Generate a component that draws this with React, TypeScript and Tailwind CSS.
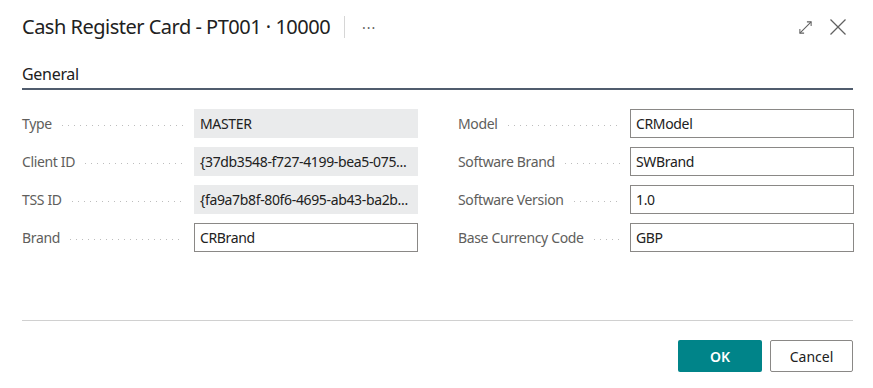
import { useState } from 'react';

type Field = { label: string; value: string; readOnly?: boolean };

const LEFT: Field[] = [
  { label: 'Type', value: 'MASTER', readOnly: true },
  { label: 'Client ID', value: '{37db3548-f727-4199-bea5-075...', readOnly: true },
  { label: 'TSS ID', value: '{fa9a7b8f-80f6-4695-ab43-ba2b...', readOnly: true },
  { label: 'Brand', value: 'CRBrand' },
];

const RIGHT: Field[] = [
  { label: 'Model', value: 'CRModel' },
  { label: 'Software Brand', value: 'SWBrand' },
  { label: 'Software Version', value: '1.0' },
  { label: 'Base Currency Code', value: 'GBP' },
];

function FieldRow({ field }: { field: Field }) {
  const [value, setValue] = useState(field.value);
  return (
    <div className="flex items-center h-[29px]">
      <div className="w-[172px] flex items-center pr-[10px] h-full">
        <span className="text-[14px] text-[#605e5c] whitespace-nowrap tracking-[-0.35px]">{field.label}</span>
        {/* dotted leader */}
        <span className="flex-1 ml-[10px] mt-[4px] h-[1px] bg-[linear-gradient(to_right,#bdbdbd_1px,transparent_1px)] bg-[length:6px_1px] bg-repeat-x" />
      </div>
      {field.readOnly ? (
        <div className="w-[224px] h-full bg-[#eaebec] px-[6px] flex items-center text-[14px] text-[#212121] tracking-[-0.35px] whitespace-nowrap overflow-hidden">
          {value}
        </div>
      ) : (
        <input
          value={value}
          onChange={(e) => setValue(e.target.value)}
          className="w-[224px] h-full border border-[#8a8886] px-[5px] text-[14px] text-[#212121] tracking-[-0.35px] outline-none bg-white"
        />
      )}
    </div>
  );
}

export default function App() {
  return (
    <div className="w-[873px] h-[388px] bg-white font-['Noto_Sans','Open_Sans',sans-serif] pl-[22px] pr-[20px] flex flex-col">
      {/* header */}
      <div className="flex items-center h-[52px] pt-[2px]">
        <h1 className="text-[20px] text-[#212121] tracking-[-0.5px] leading-none">Cash Register Card - PT001 · 10000</h1>
        <span className="ml-[14px] w-px h-[22px] bg-[#d6d6d6]" />
        <span className="ml-[17px] text-[14px] text-[#605e5c] tracking-[1px] leading-none mt-[2px]">···</span>
        <div className="ml-auto flex items-center gap-[16px] mr-[6px]">
          <svg width="15" height="15" viewBox="0 0 16 16" fill="none" stroke="#616161" strokeWidth="1.1">
            <path d="M2 14 L14 2" />
            <path d="M9.5 2 H14 V6.5" />
            <path d="M2 9.5 V14 H6.5" />
          </svg>
          <svg width="18" height="18" viewBox="0 0 18 18" fill="none" stroke="#616161" strokeWidth="1.3">
            <path d="M1.5 1.5 L16.5 16.5" />
            <path d="M16.5 1.5 L1.5 16.5" />
          </svg>
        </div>
      </div>

      {/* General group */}
      <div className="border-b-2 border-[#505c6d] pt-[11px] pb-[3px]">
        <h2 className="text-[16px] text-[#212121] leading-[22px] tracking-[-0.3px]">General</h2>
      </div>

      <div className="grid grid-cols-[396px_396px] gap-x-[40px] pt-[19px]">
        <div className="flex flex-col gap-[9px]">
          {LEFT.map((f) => (
            <FieldRow key={f.label} field={f} />
          ))}
        </div>
        <div className="flex flex-col gap-[9px]">
          {RIGHT.map((f) => (
            <FieldRow key={f.label} field={f} />
          ))}
        </div>
      </div>

      {/* footer */}
      <div className="mt-auto border-t border-[#d0d0d0] flex justify-end gap-[8px] pt-[19px] pb-[16px]">
        <button className="w-[84px] h-[32px] bg-[#008489] text-white text-[14px] font-semibold rounded-[2px]">OK</button>
        <button className="w-[83px] h-[32px] bg-white border border-[#8a8886] text-[#212121] text-[14px] rounded-[2px]">Cancel</button>
      </div>
    </div>
  );
}
